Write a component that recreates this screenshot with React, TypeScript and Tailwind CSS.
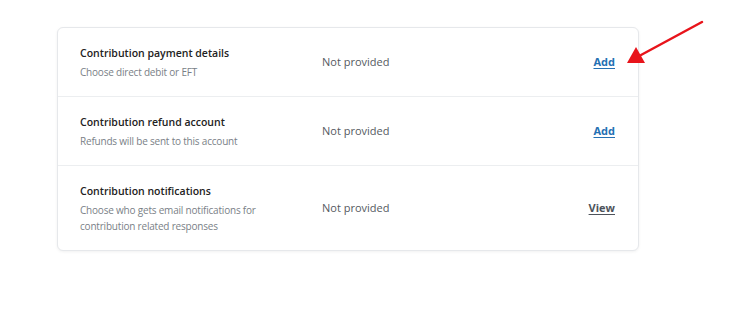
import React from 'react';

const rows = [
  { title: 'Contribution payment details', sub: 'Choose direct debit or EFT', action: 'Add', primary: true },
  { title: 'Contribution refund account', sub: 'Refunds will be sent to this account', action: 'Add', primary: true },
  { title: 'Contribution notifications', sub: 'Choose who gets email notifications for contribution related responses', action: 'View', primary: false },
];

export default function App() {
  return (
    <div className="relative w-[730px] h-[325px] bg-white" style={{ fontFamily: '"Open Sans", "Liberation Sans", sans-serif' }}>
      <div className="pt-[27px] pl-[57px]">
        <div className="w-[582px] rounded-[6px] border border-[#e6e8eb] bg-white shadow-[0_1px_3px_rgba(0,0,0,0.06)]">
          {rows.map((r, i) => (
            <div key={i} className={`flex items-center pl-[22px] pr-[23px] pt-[17px] pb-[16px] ${i > 0 ? 'border-t border-[#eceef0]' : ''}`}>
              <div className="w-[242px] shrink-0 pr-[40px]">
                <div className="text-[10.5px] leading-[16px] font-semibold text-[#222]">{r.title}</div>
                <div className="mt-[3px] text-[10px] leading-[16px] tracking-[-0.02em] text-[#7a7f87]">{r.sub}</div>
              </div>
              <div className="flex-1 text-[11px] text-[#555a61]">Not provided</div>
              <a href="#" className={`text-[11px] font-bold underline underline-offset-2 ${r.primary ? 'text-[#2470b3]' : 'text-[#4d535b]'}`}>
                {r.action}
              </a>
            </div>
          ))}
        </div>
      </div>

      {/* red annotation arrow */}
      <svg className="absolute left-0 top-0" width="730" height="325" viewBox="0 0 730 325">
        <line x1="702" y1="22" x2="641" y2="55" stroke="#e8141b" strokeWidth="2.5" strokeLinecap="round" />
        <polygon points="627,63 636,47 645,63" fill="#e8141b" />
      </svg>
    </div>
  );
}
